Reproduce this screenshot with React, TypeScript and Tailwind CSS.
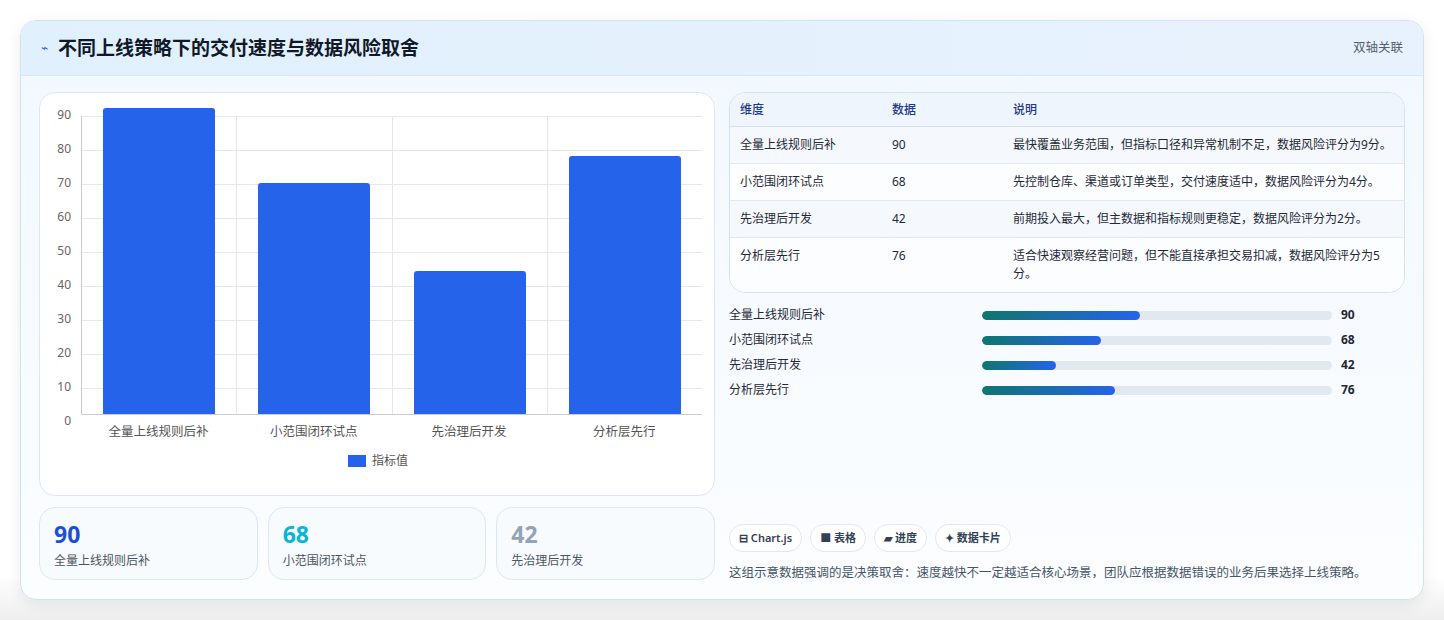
import React from "react";

const data = [
  { name: "全量上线规则后补", v: 90, desc: "最快覆盖业务范围，但指标口径和异常机制不足，数据风险评分为9分。" },
  { name: "小范围闭环试点", v: 68, desc: "先控制仓库、渠道或订单类型，交付速度适中，数据风险评分为4分。" },
  { name: "先治理后开发", v: 42, desc: "前期投入最大，但主数据和指标规则更稳定，数据风险评分为2分。" },
  { name: "分析层先行", v: 76, desc: "适合快速观察经营问题，但不能直接承担交易扣减，数据风险评分为5分。" },
];

const font = { fontFamily: '"Noto Sans", "Noto Sans CJK SC", sans-serif' };

function Chart() {
  const ticks = [90, 80, 70, 60, 50, 40, 30, 20, 10, 0];
  return (
    <div className="flex flex-col h-[404px] rounded-2xl border border-[#dbe7f3] bg-white pt-[15px] pl-[14px] pr-[12px]">
      <div className="flex h-[334px]">
        <div className="w-[27px] relative">
          {ticks.map((t, i) => (
            <div key={t} className="absolute right-[10px] text-[12px] text-[#666] leading-none" style={{ top: i * 34 + 1 }}>{t}</div>
          ))}
        </div>
        <div className="flex-1 flex flex-col">
          <div className="relative h-[308px] mt-[8px] border-l border-b border-[#c9ccd1]">
            {ticks.slice(0, 9).map((t, i) => (
              <div key={t} className="absolute left-0 right-0 border-t border-[#e5e7eb]" style={{ top: i * 34 }} />
            ))}
            <div className="absolute inset-0 flex">
              {data.map((d, i) => (
                <div key={d.name} className={`flex-1 flex items-end justify-center ${i < 3 ? "border-r border-[#e5e7eb]" : ""}`}>
                  <div className="w-[112px] bg-[#2563eb] rounded-t-[3px]" style={{ height: d.v * 3.4 }} />
                </div>
              ))}
            </div>
          </div>
          <div className="flex">
            {data.map((d) => (
              <div key={d.name} className="flex-1 text-center text-[12.5px] text-[#555] mt-[8px]">{d.name}</div>
            ))}
          </div>
        </div>
      </div>
      <div className="flex items-center justify-center gap-[6px] mt-[10px] text-[12px] text-[#555]">
        <span className="w-[18px] h-[12px] bg-[#2563eb]" />指标值
      </div>
    </div>
  );
}

export default function App() {
  return (
    <div className="w-[1444px] h-[620px] bg-[linear-gradient(#ffffff_0%,#ffffff_93%,#eeeeee_100%)] pt-[20px] px-[20px]" style={font}>
      <div className="h-[580px] rounded-2xl border border-[#cfe3f1] bg-[linear-gradient(180deg,#f2f8fe,#fbfdff)] overflow-hidden shadow-[0_4px_16px_rgba(0,0,0,0.08)]">
        <div className="h-[55px] flex items-center justify-between px-[20px] bg-[linear-gradient(90deg,#e0f0fd,#e8f2fd)] border-b border-[#d6e8f6]">
          <div className="flex items-center gap-[10px]">
            <span className="text-[#2563eb] text-[12px]">⌁</span>
            <span className="text-[19px] font-bold text-[#111827]">不同上线策略下的交付速度与数据风险取舍</span>
          </div>
          <span className="text-[12.5px] text-[#555f6d]">双轴关联</span>
        </div>
        <div className="flex gap-[14px] px-[18px] pt-[16px]">
          <div className="w-[676px] flex flex-col gap-[11px]">
            <Chart />
            <div className="flex gap-[10px]">
              {[
                ["90", "全量上线规则后补", "text-[#1d4ed8]"],
                ["68", "小范围闭环试点", "text-[#06b6d4]"],
                ["42", "先治理后开发", "text-[#94a3b8]"],
              ].map(([n, l, c]) => (
                <div key={n} className="flex-1 h-[73px] rounded-2xl border border-[#dbe7f3] bg-[#f8fbfe] px-[14px] pt-[12px]">
                  <div className={`text-[23px] font-bold leading-[28px] ${c}`}>{n}</div>
                  <div className="text-[12px] text-[#4b5563] mt-[4px]">{l}</div>
                </div>
              ))}
            </div>
          </div>
          <div className="w-[676px] flex flex-col">
            <div className="rounded-2xl border border-[#d4e1ee] overflow-hidden bg-white text-[12px] text-[#1f2937]">
              <div className="flex h-[34px] items-center bg-[#eef5fd] border-b border-[#d4e1ee] text-[#1e3a8a] font-medium">
                <div className="w-[162px] pl-[10px]">维度</div>
                <div className="w-[121px]">数据</div>
                <div className="flex-1">说明</div>
              </div>
              {data.map((d, i) => (
                <div key={d.name} className={`flex py-[9px] leading-[18px] ${i % 2 === 0 ? "bg-[#f5f9fd]" : "bg-[#fbfdff]"} ${i < 3 ? "border-b border-[#e2e8f0]" : ""}`}>
                  <div className="w-[162px] pl-[10px]">{d.name}</div>
                  <div className="w-[121px]">{d.v}</div>
                  <div className="flex-1 pr-[8px]">{d.desc}</div>
                </div>
              ))}
            </div>
            <div className="flex flex-col gap-[7px] mt-[13px]">
              {data.map((d) => (
                <div key={d.name} className="flex items-center h-[18px] text-[12px] text-[#1f2937]">
                  <div className="w-[253px]">{d.name}</div>
                  <div className="w-[350px] h-[9px] rounded-full bg-[#e2e8f0] overflow-hidden">
                    <div className="h-full rounded-full bg-[linear-gradient(90deg,#0f766e,#2563eb)]" style={{ width: `${d.v / 2}%` }} />
                  </div>
                  <div className="ml-[9px] font-bold">{d.v}</div>
                </div>
              ))}
            </div>
            <div className="flex gap-[8px] mt-[125px]">
              {["⊟ Chart.js", "■ 表格", "▰ 进度", "✦ 数据卡片"].map((c) => (
                <span key={c} className="h-[28px] px-[9px] flex items-center rounded-full border border-[#e2e8f0] bg-white text-[11px] font-semibold text-[#334155]">{c}</span>
              ))}
            </div>
            <div className="mt-[12px] text-[12.5px] text-[#475569]">这组示意数据强调的是决策取舍：速度越快不一定越适合核心场景，团队应根据数据错误的业务后果选择上线策略。</div>
          </div>
        </div>
      </div>
    </div>
  );
}
